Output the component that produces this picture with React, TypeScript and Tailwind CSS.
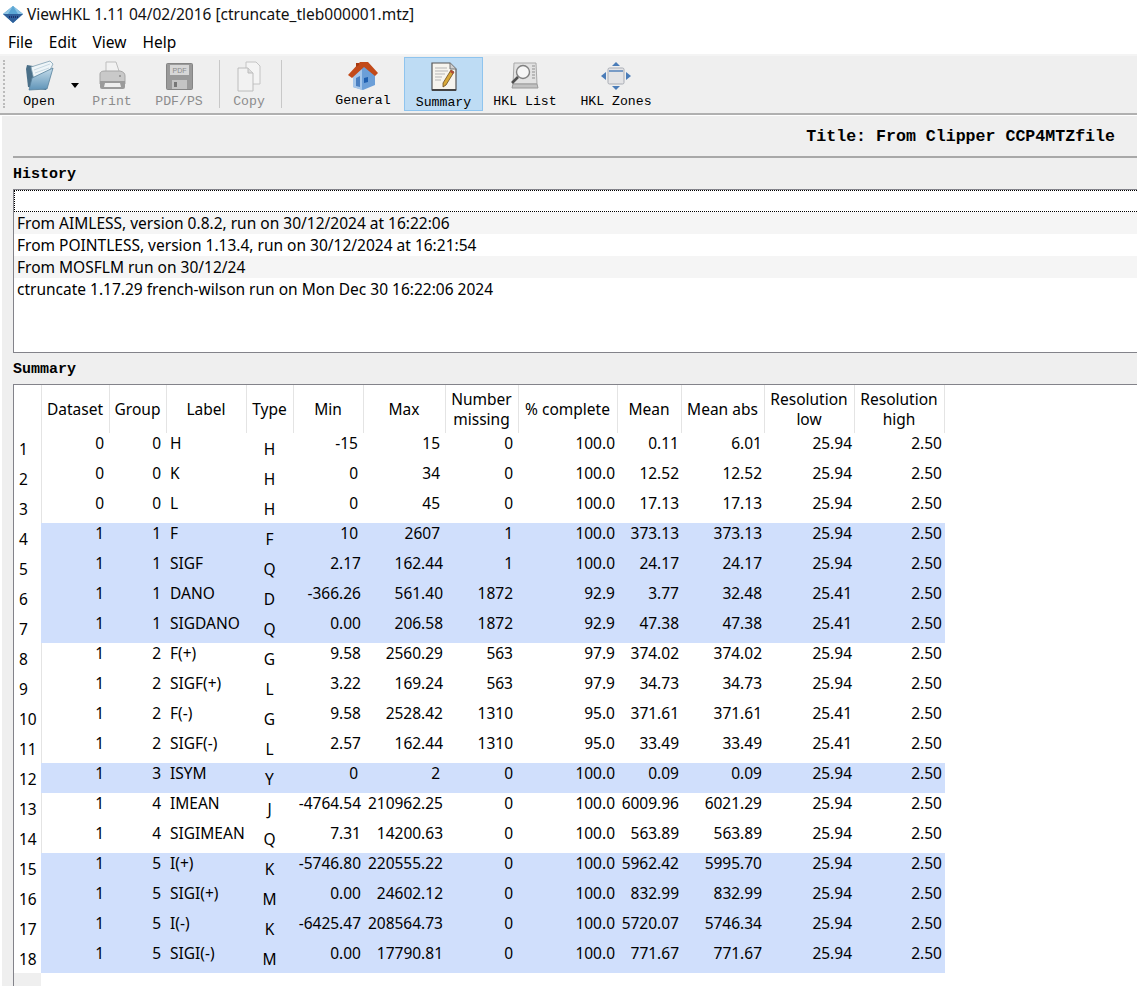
const ui = "font-['Noto_Sans','Open_Sans',sans-serif]";
const mono = "font-['Liberation_Mono','DejaVu_Sans_Mono',monospace]";

type Row = [string, string, string, string, string, string, string, string, string, string, string, string];

const rows: Row[] = [
  ["0", "0", "H", "H", "-15", "15", "0", "100.0", "0.11", "6.01", "25.94", "2.50"],
  ["0", "0", "K", "H", "0", "34", "0", "100.0", "12.52", "12.52", "25.94", "2.50"],
  ["0", "0", "L", "H", "0", "45", "0", "100.0", "17.13", "17.13", "25.94", "2.50"],
  ["1", "1", "F", "F", "10", "2607", "1", "100.0", "373.13", "373.13", "25.94", "2.50"],
  ["1", "1", "SIGF", "Q", "2.17", "162.44", "1", "100.0", "24.17", "24.17", "25.94", "2.50"],
  ["1", "1", "DANO", "D", "-366.26", "561.40", "1872", "92.9", "3.77", "32.48", "25.41", "2.50"],
  ["1", "1", "SIGDANO", "Q", "0.00", "206.58", "1872", "92.9", "47.38", "47.38", "25.41", "2.50"],
  ["1", "2", "F(+)", "G", "9.58", "2560.29", "563", "97.9", "374.02", "374.02", "25.94", "2.50"],
  ["1", "2", "SIGF(+)", "L", "3.22", "169.24", "563", "97.9", "34.73", "34.73", "25.94", "2.50"],
  ["1", "2", "F(-)", "G", "9.58", "2528.42", "1310", "95.0", "371.61", "371.61", "25.41", "2.50"],
  ["1", "2", "SIGF(-)", "L", "2.57", "162.44", "1310", "95.0", "33.49", "33.49", "25.41", "2.50"],
  ["1", "3", "ISYM", "Y", "0", "2", "0", "100.0", "0.09", "0.09", "25.94", "2.50"],
  ["1", "4", "IMEAN", "J", "-4764.54", "210962.25", "0", "100.0", "6009.96", "6021.29", "25.94", "2.50"],
  ["1", "4", "SIGIMEAN", "Q", "7.31", "14200.63", "0", "100.0", "563.89", "563.89", "25.94", "2.50"],
  ["1", "5", "I(+)", "K", "-5746.80", "220555.22", "0", "100.0", "5962.42", "5995.70", "25.94", "2.50"],
  ["1", "5", "SIGI(+)", "M", "0.00", "24602.12", "0", "100.0", "832.99", "832.99", "25.94", "2.50"],
  ["1", "5", "I(-)", "K", "-6425.47", "208564.73", "0", "100.0", "5720.07", "5746.34", "25.94", "2.50"],
  ["1", "5", "SIGI(-)", "M", "0.00", "17790.81", "0", "100.0", "771.67", "771.67", "25.94", "2.50"],
];

const highlighted = [3, 4, 5, 6, 11, 14, 15, 16, 17];

const headers = [
  ["Dataset"], ["Group"], ["Label"], ["Type"], ["Min"], ["Max"], ["Number", "missing"], ["% complete"],
  ["Mean"], ["Mean abs"], ["Resolution", "low"], ["Resolution", "high"],
];

const gridCols = "grid w-[904px] grid-cols-[68px_57px_80px_47px_70px_82px_73px_99px_64px_83px_90px_90px]";
const gridLine = "shadow-[1px_0_0_#e4e4e4]";

const history = [
  "From AIMLESS, version 0.8.2, run on 30/12/2024 at 16:22:06",
  "From POINTLESS, version 1.13.4, run on 30/12/2024 at 16:21:54",
  "From MOSFLM run on 30/12/24",
  "ctruncate 1.17.29 french-wilson run on Mon Dec 30 16:22:06 2024",
];

const Logo = () => (
  <svg width="22" height="20" viewBox="0 0 22 20">
    <path d="M11 1 L21 9 L11 18 L1 9 Z" fill="#3f8fc4" />
    <path d="M11 1 L21 9 L1 9 Z" fill="#8cc4e4" />
    <path d="M11 1 L16 9 L6 9 Z" fill="#5aa6d4" />
    <path d="M1 9 L21 9 L11 18 Z" fill="#2f5f9a" />
    <path d="M7 12 h9" stroke="#1a2f6a" strokeWidth="2" strokeDasharray="1 1" />
  </svg>
);

const OpenIcon = () => (
  <svg width="32" height="32" viewBox="0 0 32 32">
    <defs>
      <linearGradient id="folderFront" x1="0" y1="0" x2="0" y2="1">
        <stop offset="0" stopColor="#c4dcea" />
        <stop offset="1" stopColor="#5f94b8" />
      </linearGradient>
    </defs>
    <path d="M3 9 L5 27 L23 30 L23 14 L10 6 L4 5 Z" fill="#4a6f88" />
    <path d="M8 7 L27 1 L30 4 L24 16 L11 20 Z" fill="#eef5f8" stroke="#7f9fb2" strokeWidth="0.8" />
    <path d="M11 10 L27 4 M12 13 L26 8" stroke="#bcd0dc" strokeWidth="0.8" />
    <path d="M9 18 L30 8 L24 29 L6 30 Z" fill="url(#folderFront)" stroke="#55809c" strokeWidth="0.8" />
  </svg>
);

const PrintIcon = () => (
  <svg width="30" height="30" viewBox="0 0 30 30">
    <path d="M9 1 L19 1 L23 13 L9 13 Z" fill="#f2f2f2" stroke="#bdbdbd" />
    <path d="M3 13 Q3 10 8 10 L23 10 Q28 11 28 15 L28 23 L3 23 Z" fill="#c9c9c9" stroke="#a5a5a5" />
    <path d="M3 20 L28 20 L28 26 Q28 28 26 28 L5 28 Q3 28 3 26 Z" fill="#9b9b9b" />
    <path d="M8 22 L23 22 L24 26 L7 26 Z" fill="#efefef" />
    <circle cx="23" cy="15" r="1" fill="#8a8a8a" />
  </svg>
);

const PdfIcon = () => (
  <svg width="27" height="27" viewBox="0 0 27 27">
    <rect x="0.5" y="0.5" width="26" height="26" rx="1" fill="#9a9a9a" stroke="#858585" />
    <rect x="4" y="2" width="19" height="10" fill="#d7d7d7" />
    <rect x="6" y="17" width="15" height="9" fill="#c4c4c4" />
    <rect x="8" y="19" width="3" height="5" fill="#777" />
    <text x="13.5" y="9.5" textAnchor="middle" fontSize="7" fill="#8a8a8a" fontFamily="Liberation Sans">PDF</text>
  </svg>
);

const CopyIcon = () => (
  <svg width="26" height="31" viewBox="0 0 26 31">
    <path d="M10 1 L20 1 L24 5 L24 23 L10 23 Z" fill="#f4f4f4" stroke="#c4c4c4" />
    <path d="M2 7 L12 7 L17 12 L17 30 L2 30 Z" fill="#f2f2f2" stroke="#bcbcbc" />
    <path d="M12 7 L12 12 L17 12" fill="#dcdcdc" stroke="#bcbcbc" />
  </svg>
);

const HouseIcon = () => (
  <svg width="32" height="30" viewBox="0 0 32 30">
    <path d="M6 13 L6 26 L16 29 L28 24 L28 12 L16 4 Z" fill="#6c9fd8" />
    <path d="M6 14 L15 8 L15 29 L6 26 Z" fill="#a5c6ea" />
    <path d="M9 17 L13 15 L13 26 L9 25 Z" fill="#4a7fc0" />
    <path d="M17 17 L21 16 L21 21 L17 22 Z" fill="#1f5fb0" />
    <path d="M1 14 L13 1 L21 1 L31 12 L28 15 L17 6 L5 17 Z" fill="#c24a1a" />
    <path d="M9 6 L9 2 L12 2 L12 4 Z" fill="#a83a10" />
  </svg>
);

const NoteIcon = () => (
  <svg width="26" height="30" viewBox="0 0 26 30">
    <path d="M1 1 L19 1 L25 7 L25 28 L1 28 Z" fill="#f6f4ee" stroke="#555" strokeWidth="1.2" />
    <path d="M1 28 L25 28" stroke="#444" strokeWidth="2" />
    <path d="M19 1 L19 7 L25 7" fill="#cfcfcf" stroke="#777" />
    <path d="M4 6 H16 M4 9 H17 M4 12 H14 M4 15 H11 M4 18 H10" stroke="#b5b5b5" />
    <path d="M20 8 L23 10 L15 23 L12 25 L12 21 Z" fill="#d8a838" stroke="#6a4a20" strokeWidth="0.8" />
    <path d="M20 8 L23 10 L22 12 L19 10 Z" fill="#b04a3a" />
  </svg>
);

const ListIcon = () => (
  <svg width="28" height="28" viewBox="0 0 28 28">
    <path d="M3 1 L25 1 L26 22 L2 22 Z" fill="#e2e2e2" stroke="#a9a9a9" />
    <path d="M2 22 L26 22 L27 26 L1 26 Z" fill="#c2c2c2" stroke="#9a9a9a" />
    <path d="M21 4 H24 M21 7 H24 M21 10 H24 M21 13 H24 M21 16 H24" stroke="#8f8f8f" />
    <circle cx="12" cy="10" r="6.5" fill="#f6f6f6" stroke="#808080" strokeWidth="1.4" />
    <path d="M7 15 L1 21" stroke="#4f4f4f" strokeWidth="2.6" />
  </svg>
);

const ZonesIcon = () => (
  <svg width="30" height="30" viewBox="0 0 30 30">
    <path d="M15 1 L19 5 L11 5 Z M15 29 L19 25 L11 25 Z M0 15 L5 11 L5 19 Z M30 15 L25 11 L25 19 Z" fill="#4a7cb8" />
    <rect x="7" y="7" width="16" height="16" rx="1.5" fill="#e4e4e6" stroke="#a9adb5" />
    <path d="M8 10 H22" stroke="#4a7cb8" strokeWidth="1.4" />
  </svg>
);

const ToolButton = ({
  label,
  icon,
  muted,
  active,
  short,
  className,
}: {
  label: string;
  icon: React.ReactNode;
  muted?: boolean;
  active?: boolean;
  short?: boolean;
  className: string;
}) => (
  <div
    className={`flex flex-col items-center h-[54px] ${className} ${
      active ? "bg-[#bedcf4] border border-[#8fc4ee]" : ""
    }`}
  >
    <div className={`${short ? "h-[35px]" : "h-[36px]"} shrink-0 pt-[2px] flex items-center justify-center`}>{icon}</div>
    <span className={`${mono} text-[13.2px] leading-[18px] whitespace-nowrap ${muted ? "text-[#8c8c8c]" : "text-black"}`}>
      {label}
    </span>
  </div>
);

export default function App() {
  return (
    <div className={`${ui} w-[1137px] h-[986px] bg-white overflow-hidden text-[15.5px] text-black`}>
      <div className="h-[30px] flex items-center pl-[2px] gap-[3px]">
        <Logo />
        <span className="text-[#111]">ViewHKL 1.11 04/02/2016 [ctruncate_tleb000001.mtz]</span>
      </div>
      <div className="h-[24px] flex items-center pl-[8px] pt-[2px] gap-[16px]">
        <span>File</span>
        <span>Edit</span>
        <span>View</span>
        <span>Help</span>
      </div>
      <div className="h-[61px] border-t-2 border-b-2 border-t-[#f4f4f4] border-b-[#b0b0b0] bg-[#efefef] flex items-start pt-[1px]">
        <div className="w-[6px] h-[48px] ml-[3px] mt-[3px] border-l-2 border-dotted border-[#bbb]" />
        <ToolButton label="Open" icon={<OpenIcon />} className="w-[50px] ml-[5px]" />
        <span className="mt-[26px] ml-[7px] w-0 h-0 border-x-[4px] border-x-transparent border-t-[5px] border-t-black" />
        <ToolButton label="Print" icon={<PrintIcon />} muted className="w-[50px] ml-[8px]" />
        <ToolButton label="PDF/PS" icon={<PdfIcon />} muted className="w-[60px] ml-[12px]" />
        <div className="w-px h-[48px] mt-[3px] ml-[10px] bg-[#c8c8c8]" />
        <ToolButton label="Copy" icon={<CopyIcon />} muted className="w-[50px] ml-[4px]" />
        <div className="w-px h-[48px] mt-[3px] ml-[7px] bg-[#c8c8c8]" />
        <ToolButton label="General" icon={<HouseIcon />} short className="w-[70px] ml-[46px]" />
        <ToolButton label="Summary" icon={<NoteIcon />} active className="w-[79px] ml-[6px]" />
        <ToolButton label="HKL List" icon={<ListIcon />} className="w-[80px] ml-[2px]" />
        <ToolButton label="HKL Zones" icon={<ZonesIcon />} className="w-[80px] ml-[11px]" />
      </div>

      <div className="h-[870px] ml-[2px] mt-[1px] bg-[#efefef] pl-[11px]">
        <div className="h-[42px] pt-[3px] border-b-2 border-[#a8a8a8] flex items-center justify-end pr-[22px]">
          <span className={`${mono} font-bold text-[16.6px]`}>Title: From Clipper CCP4MTZfile</span>
        </div>
        <div className={`${mono} font-bold text-[15px] h-[31px] pt-[8px] leading-[18px]`}>History</div>
        <div className="h-[164px] border border-r-0 border-[#83838a] bg-white">
          <div className="h-[22px] border-y border-l border-dotted border-black" />
          {history.map((line, i) => (
            <div
              key={line}
              className={`h-[22px] leading-[23px] pl-[3px] whitespace-nowrap ${i % 2 === 0 ? "bg-[#f5f5f5]" : "bg-white"}`}
            >
              {line}
            </div>
          ))}
        </div>
        <div className={`${mono} font-bold text-[15px] h-[31px] pt-[8px] leading-[18px]`}>Summary</div>
        <div className="h-[602px] border-t border-l border-[#83838a] bg-white flex">
          <div className="w-[27px] shrink-0 flex flex-col">
            <div className={`h-[48px] ${gridLine}`} />
            {rows.map((_, i) => (
              <div key={i} className={`h-[30px] pl-[5px] pt-[5px] leading-[22px] ${gridLine}`}>
                {i + 1}
              </div>
            ))}
            <div className="flex-1 bg-[#efefef]" />
          </div>
          <div className="flex flex-col">
            <div className={gridCols}>
              {headers.map((h) => (
                <div
                  key={h.join()}
                  className={`h-[48px] ${gridLine} flex flex-col items-center justify-center leading-[20px] whitespace-nowrap`}
                >
                  {h.map((t) => (
                    <span key={t}>{t}</span>
                  ))}
                </div>
              ))}
            </div>
            {rows.map((r, i) => (
              <div key={r[2] + i} className={`${gridCols} h-[30px] ${highlighted.includes(i) ? "bg-[#d0dffc]" : ""}`}>
                {r.map((c, j) =>
                  j === 2 ? (
                    <div key={j} className="pl-[4px] h-[20px] leading-[20px] whitespace-nowrap">
                      {c}
                    </div>
                  ) : j === 3 ? (
                    <div key={j} className="text-center pt-[5px] leading-[22px]">
                      {c}
                    </div>
                  ) : (
                    <div
                      key={j}
                      className={`flex justify-end h-[20px] leading-[20px] whitespace-nowrap ${
                        c.includes(".") ? "pr-[2px]" : "pr-[5px]"
                      }`}
                    >
                      {c}
                    </div>
                  ),
                )}
              </div>
            ))}
          </div>
        </div>
      </div>
    </div>
  );
}
